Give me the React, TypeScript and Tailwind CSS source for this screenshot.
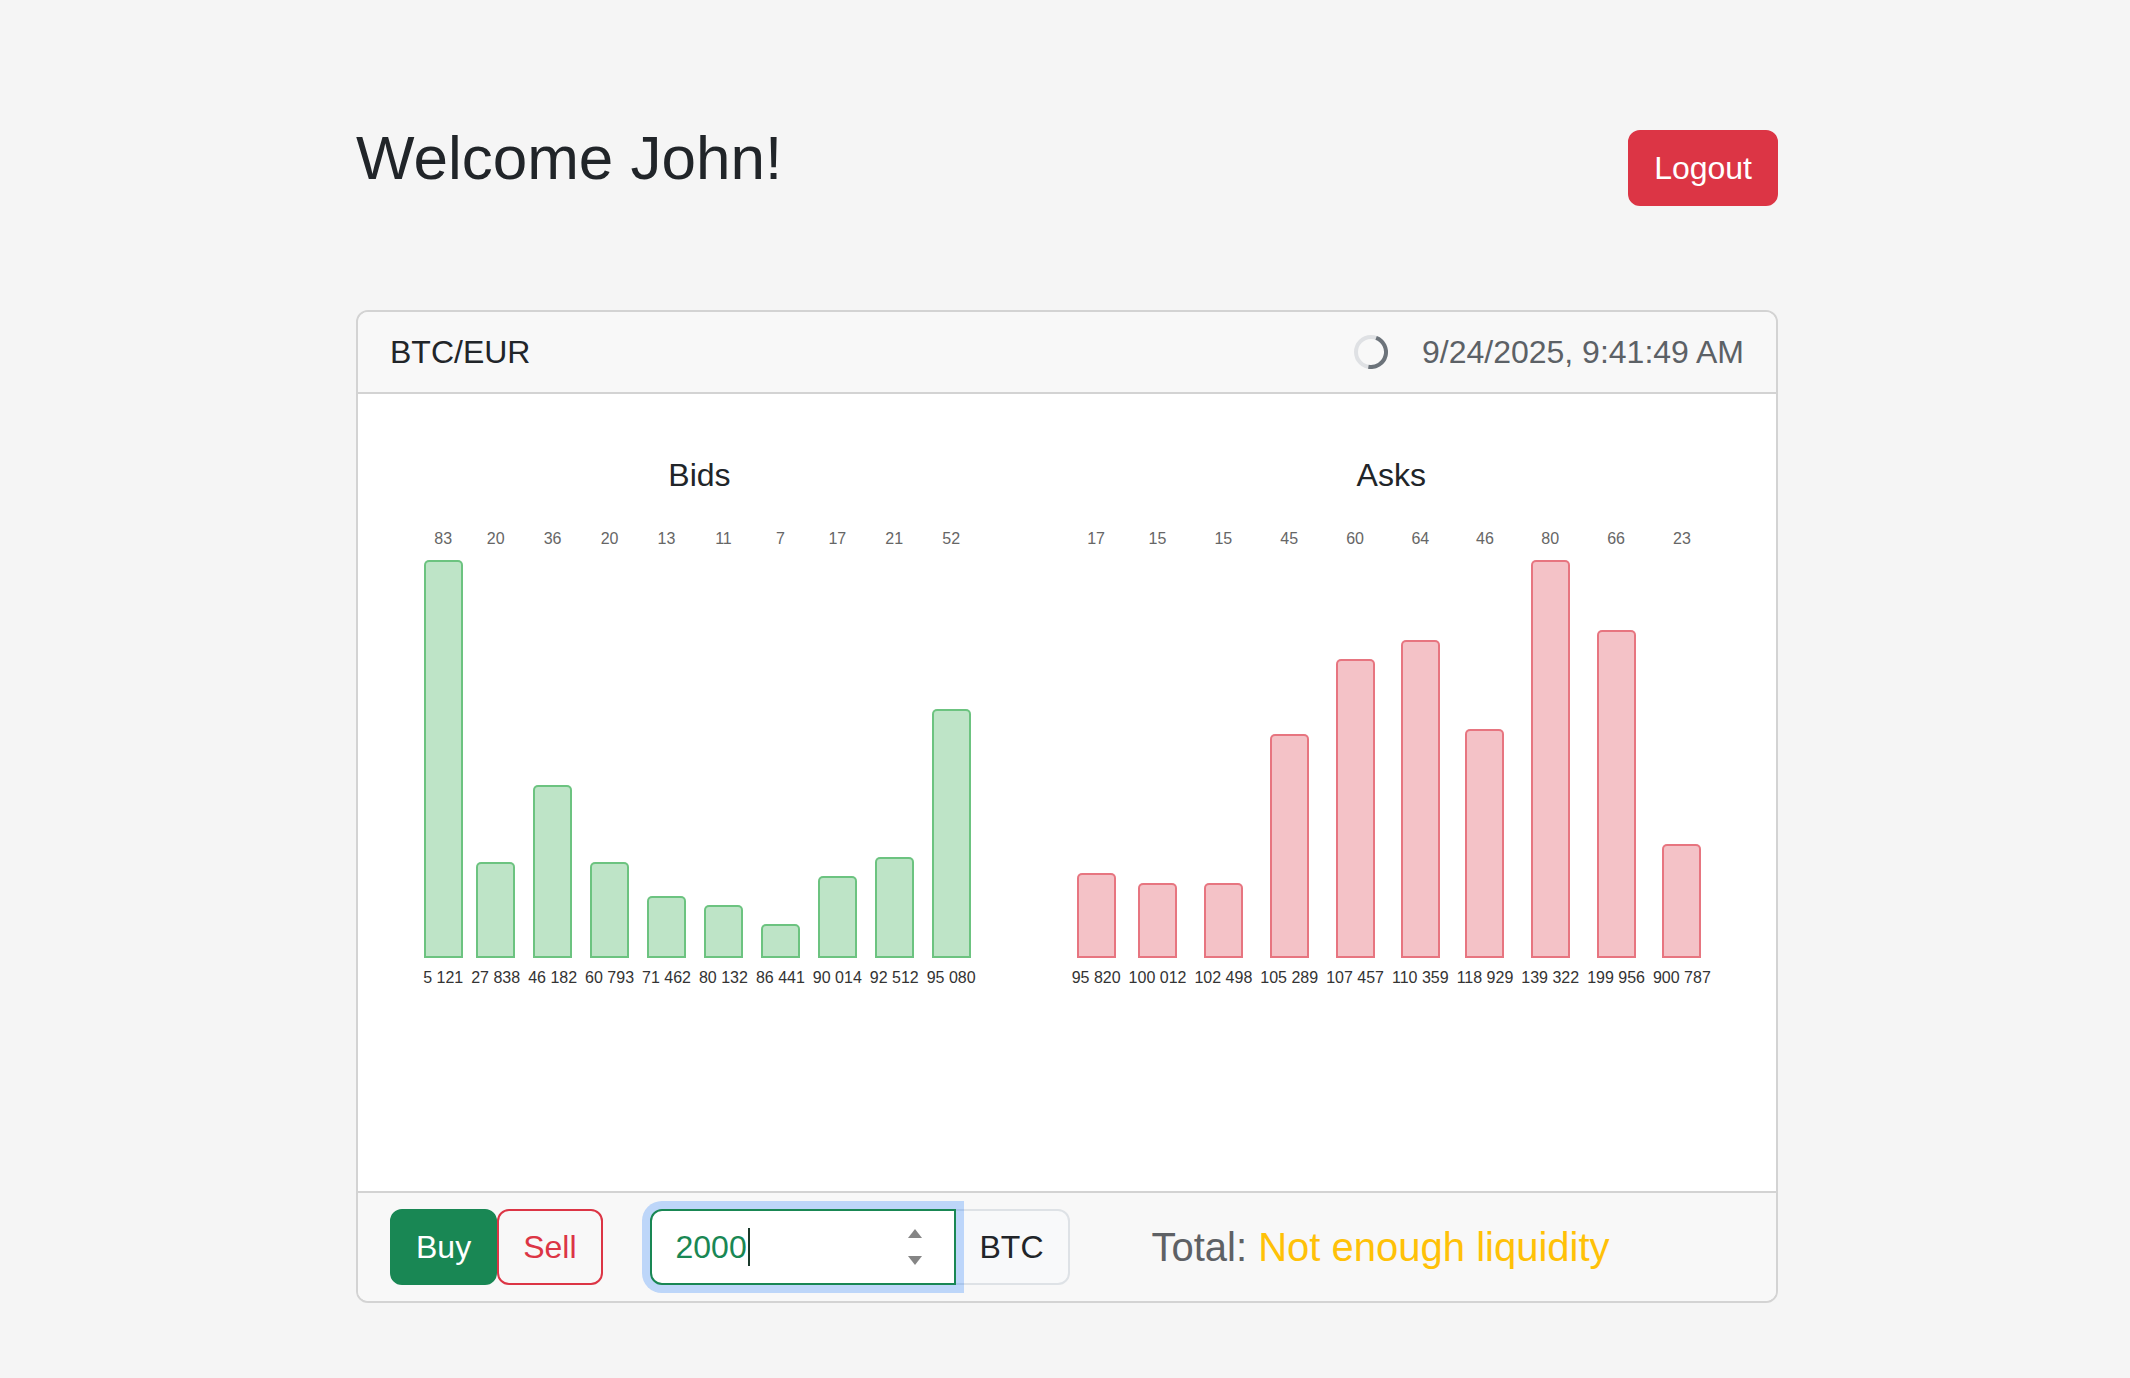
type Level = [number, number];

const bids: Level[] = [
  [5121, 83],
  [27838, 20],
  [46182, 36],
  [60793, 20],
  [71462, 13],
  [80132, 11],
  [86441, 7],
  [90014, 17],
  [92512, 21],
  [95080, 52],
];

const asks: Level[] = [
  [95820, 17],
  [100012, 15],
  [102498, 15],
  [105289, 45],
  [107457, 60],
  [110359, 64],
  [118929, 46],
  [139322, 80],
  [199956, 66],
  [900787, 23],
];

const BAR_AREA = 398;

const formatPrice = (n: number) => n.toString().replace(/\B(?=(\d{3})+(?!\d))/g, ' ');

type ChartProps = {
  title: string;
  levels: Level[];
  side: 'bid' | 'ask';
};

const DepthChart = ({ title, levels, side }: ChartProps) => {
  const max = Math.max(...levels.map(([, v]) => v));
  const barClass =
    side === 'bid'
      ? 'bg-[rgba(40,167,69,0.3)] border-[rgba(40,167,69,0.55)]'
      : 'bg-[rgba(220,53,69,0.3)] border-[rgba(220,53,69,0.55)]';

  return (
    <div className="flex flex-col items-center">
      <div className="text-[32px] leading-[48px] text-[#212529]">{title}</div>
      <div className="mt-[28px] flex items-start gap-[8px]">
        {levels.map(([price, volume]) => (
          <div key={price} className="flex flex-col items-center">
            <div className="text-[16px] leading-[24px] text-[#666666]">{volume}</div>
            <div className="mt-[9px] flex h-[398px] items-end">
              <div
                className={`w-[39px] rounded-t-[5px] border-2 ${barClass}`}
                style={{ height: Math.round((volume / max) * BAR_AREA) }}
              />
            </div>
            <div className="mt-[8px] whitespace-nowrap text-[16px] leading-[24px] text-[#333333]">
              {formatPrice(price)}
            </div>
          </div>
        ))}
      </div>
    </div>
  );
};

const Spinner = () => (
  <svg width="34" height="34" viewBox="0 0 34 34">
    <circle cx="17" cy="17" r="15" fill="none" stroke="#dfe1e4" strokeWidth="4" />
    <path d="M22.13 2.9 A15 15 0 0 1 14.4 31.77" fill="none" stroke="#6c737a" strokeWidth="4" />
  </svg>
);

const SpinArrows = () => (
  <svg width="16" height="44" viewBox="0 0 16 44">
    <polygon points="1,13 8,4 15,13" fill="#858585" />
    <polygon points="1,31 15,31 8,40" fill="#858585" />
  </svg>
);

const App = () => {
  return (
    <div className="min-h-screen bg-[#f5f5f5] font-['Liberation_Sans',Arial,sans-serif] text-[#212529]">
      <div className="mx-auto w-[1426px] pl-[4px]">
        <div className="flex items-start justify-between">
          <h1 className="mt-[121px] text-[62px] leading-[1.2]">Welcome John!</h1>
          <button className="mt-[130px] rounded-[12px] border-2 border-[#dc3545] bg-[#dc3545] px-[24px] py-[12px] text-[32px] leading-[48px] text-white">
            Logout
          </button>
        </div>

        <div className="mt-[104px] overflow-hidden rounded-[12px] border-2 border-[#d3d3d3] bg-white">
          <div className="flex items-center justify-between border-b-2 border-[#d3d3d3] bg-[#f8f8f8] px-[32px] py-[16px] text-[32px] leading-[48px]">
            <span>BTC/EUR</span>
            <div className="flex items-center gap-[34px]">
              <Spinner />
              <span className="text-[#5c6166]">9/24/2025, 9:41:49 AM</span>
            </div>
          </div>

          <div className="flex h-[797px] justify-center gap-[96px] pt-[57px]">
            <DepthChart title="Bids" levels={bids} side="bid" />
            <DepthChart title="Asks" levels={asks} side="ask" />
          </div>

          <div className="flex items-center border-t-2 border-[#d3d3d3] bg-[#f8f8f8] px-[32px] py-[16px]">
            <div className="flex">
              <button className="rounded-[12px] border-2 border-[#198754] bg-[#198754] px-[24px] py-[12px] text-[32px] leading-[48px] text-white">
                Buy
              </button>
              <button className="rounded-[12px] border-2 border-[#dc3545] px-[24px] py-[12px] text-[32px] leading-[48px] text-[#dc3545]">
                Sell
              </button>
            </div>

            <div className="ml-[47px] flex">
              <div className="relative z-10 flex h-[76px] w-[306px] items-center justify-between rounded-l-[12px] border-2 border-[#198754] bg-white pl-[24px] pr-[31px] text-[32px] text-[#198754] shadow-[0_0_0_8px_rgba(13,110,253,0.25)]">
                <div className="flex items-center">
                  <span>2000</span>
                  <span className="ml-[1px] h-[38px] w-[2px] bg-[#1b3a2c]" />
                </div>
                <SpinArrows />
              </div>
              <div className="-ml-[2px] flex h-[76px] items-center rounded-r-[12px] border-2 border-[#dee2e6] bg-[#f8f9fa] px-[24px] text-[32px] text-[#212529]">
                BTC
              </div>
            </div>

            <div className="ml-[82px] text-[40px] leading-[60px] text-[#5e6165]">
              Total: <span className="text-[#ffc107]">Not enough liquidity</span>
            </div>
          </div>
        </div>
      </div>
    </div>
  );
};

export default App;
